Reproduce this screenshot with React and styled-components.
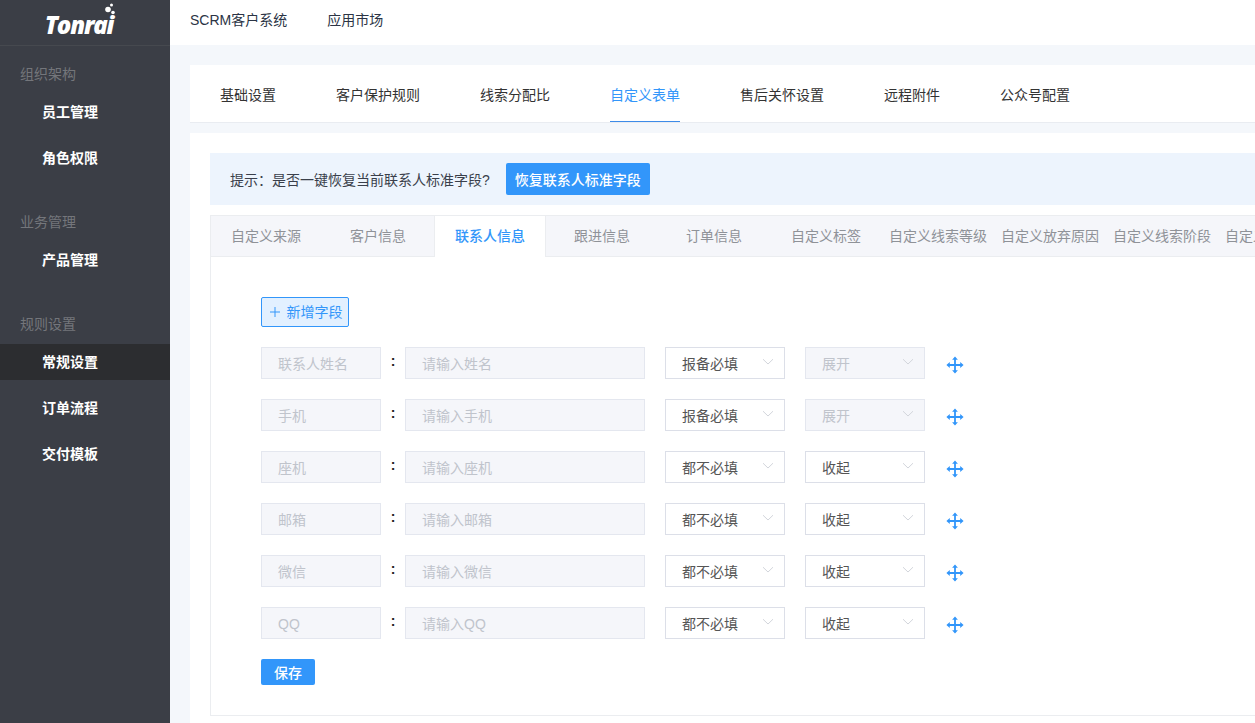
import React from 'react';
import styled, { createGlobalStyle } from 'styled-components';

const GlobalStyle = createGlobalStyle`
  html, body {
    margin: 0;
    height: 100%;
    overflow: hidden;
    background: #f4f7fb;
    font-family: "Liberation Sans", "Noto Sans CJK SC", sans-serif;
    font-size: 14px;
  }
  * { box-sizing: border-box; }
`;

const Page = styled.div`
  display: flex;
  width: 1255px;
  height: 723px;
  overflow: hidden;
`;

const Sidebar = styled.aside`
  flex: 0 0 170px;
  background: #3b3e46;
  color: #fff;
`;

const LogoBox = styled.div`
  height: 46px;
  display: flex;
  align-items: center;
  justify-content: center;
  border-bottom: 1px solid #46494f;
  padding: 4px 0 0;
`;

const LogoMark = styled.div`
  display: flex;
  align-items: flex-end;
  position: relative;
  margin-left: -12px;
`;

const LogoText = styled.span`
  font-family: "Open Sans", "Liberation Sans", sans-serif;
  font-size: 24px;
  font-weight: 800;
  font-style: italic;
  letter-spacing: -1.2px;
  color: #fff;
  line-height: 28px;
`;

const LogoDots = styled.svg`
  position: absolute;
  right: -3px;
  top: -8px;
`;

const MenuGroup = styled.div`
  padding: 17px 0 8px;
`;

const GroupLabel = styled.div`
  height: 22px;
  line-height: 22px;
  padding-left: 20px;
  color: #74767b;
  margin-bottom: 9px;
`;

const MenuItem = styled.div`
  height: 36px;
  line-height: 36px;
  margin-bottom: 10px;
  padding-left: 42px;
  font-weight: 700;
  color: #fff;
  background: ${(props) => (props.$active ? '#2c2d30' : 'transparent')};
`;

const Main = styled.div`
  flex: 1;
  min-width: 0;
  display: flex;
  flex-direction: column;
`;

const TopBar = styled.header`
  height: 45px;
  flex: none;
  background: #fff;
  display: flex;
  align-items: center;
  gap: 40px;
  padding: 0 20px 7px;
  color: #2b3445;
`;

const Content = styled.div`
  padding: 20px 0 0 20px;
  width: 1400px;
`;

const TabBar = styled.nav`
  height: 58px;
  background: #fff;
  display: flex;
  gap: 60px;
  padding-left: 30px;
  border-bottom: 1px solid #e9ecf1;
`;

const TabLink = styled.div`
  height: 57px;
  line-height: 60px;
  color: ${(props) => (props.$active ? '#3296fa' : '#333')};
  border-bottom: 1px solid ${(props) => (props.$active ? '#3d8be8' : 'transparent')};
`;

const Card = styled.section`
  margin-top: 10px;
  background: #fff;
  padding: 20px;
  height: 600px;
`;

const Notice = styled.div`
  height: 52px;
  background: #edf4fd;
  display: flex;
  align-items: center;
  gap: 16px;
  padding-left: 20px;
  color: #3a3f4b;
`;

const PrimaryButton = styled.button`
  border: none;
  border-radius: 2px;
  background: #3296fa;
  color: #fff;
  font: inherit;
  font-weight: 500;
  height: ${(props) => props.$height}px;
  padding: 0 ${(props) => props.$pad}px;
`;

const TabPanel = styled.div`
  margin-top: 10px;
  height: 501px;
  border: 1px solid #ebedf0;
`;

const PanelTabs = styled.div`
  display: flex;
  height: 41px;
  background: #f5f6fa;
  border-bottom: 1px solid #ebedf0;
`;

const PanelTab = styled.div`
  flex: 0 0 112px;
  height: ${(props) => (props.$active ? '41px' : '40px')};
  line-height: 41px;
  text-align: center;
  white-space: nowrap;
  color: ${(props) => (props.$active ? '#3296fa' : '#8f9298')};
  font-weight: ${(props) => (props.$active ? 500 : 400)};
  background: ${(props) => (props.$active ? '#fff' : 'transparent')};
  border-left: 1px solid ${(props) => (props.$active ? '#ebedf0' : 'transparent')};
  border-right: 1px solid ${(props) => (props.$active ? '#ebedf0' : 'transparent')};

  &:first-child {
    margin-left: -1px;
  }
`;

const PanelBody = styled.div`
  padding: 40px 0 0 50px;
`;

const AddButton = styled.button`
  height: 30px;
  width: 88px;
  border: 1px solid #3296fa;
  border-radius: 2px;
  background: #e2f0ff;
  color: #3296fa;
  font: inherit;
  line-height: 26px;
  display: flex;
  align-items: center;
  justify-content: center;
  gap: 7px;
  padding: 0 0 1px 2px;
  margin-bottom: 20px;
`;

const FieldRow = styled.div`
  display: flex;
  align-items: center;
  height: 32px;
  margin-bottom: 20px;
`;

const TextBox = styled.div`
  flex: 0 0 ${(props) => props.$width}px;
  height: 32px;
  line-height: 32px;
  padding-left: 16px;
  background: #f5f6fa;
  border: 1px solid #e4e7ef;
  color: #c0c4cc;
`;

const Colon = styled.span`
  flex: 0 0 24px;
  text-align: center;
  color: #222;
  line-height: 28px;
  height: 32px;
  font-weight: 700;
`;

const Select = styled.div`
  flex: 0 0 120px;
  height: 32px;
  line-height: 32px;
  margin-left: 20px;
  padding-left: 16px;
  position: relative;
  background: ${(props) => (props.$disabled ? '#f5f6fa' : '#fff')};
  border: 1px solid ${(props) => (props.$disabled ? '#e4e7ef' : '#dcdfe8')};
  color: ${(props) => (props.$disabled ? '#c0c4cc' : '#555')};
`;

const Chevron = styled.svg`
  position: absolute;
  right: 10px;
  top: 10px;
`;

const MoveIcon = styled.svg`
  margin-left: 21px;
  margin-top: 3px;
`;

const fields = [
  { label: '联系人姓名', hint: '请输入姓名', need: '报备必填', fold: '展开', locked: true },
  { label: '手机', hint: '请输入手机', need: '报备必填', fold: '展开', locked: true },
  { label: '座机', hint: '请输入座机', need: '都不必填', fold: '收起' },
  { label: '邮箱', hint: '请输入邮箱', need: '都不必填', fold: '收起' },
  { label: '微信', hint: '请输入微信', need: '都不必填', fold: '收起' },
  { label: 'QQ', hint: '请输入QQ', need: '都不必填', fold: '收起' },
];

const menu = [
  { title: '组织架构', items: ['员工管理', '角色权限'] },
  { title: '业务管理', items: ['产品管理'] },
  { title: '规则设置', items: ['常规设置', '订单流程', '交付模板'] },
];

const settingTabs = ['基础设置', '客户保护规则', '线索分配比', '自定义表单', '售后关怀设置', '远程附件', '公众号配置'];
const formTabs = ['自定义来源', '客户信息', '联系人信息', '跟进信息', '订单信息', '自定义标签', '自定义线索等级', '自定义放弃原因', '自定义线索阶段', '自定义线索来源'];

const Arrow = () => (
  <Chevron width="12" height="8" viewBox="0 0 12 8" fill="none">
    <path d="M1 1.2 L6 6 L11 1.2" stroke="#d3d6dc" strokeWidth="1" />
  </Chevron>
);

const Move = () => (
  <MoveIcon width="18" height="18" viewBox="0 0 18 18" fill="#3296fa">
    <path d="M8.1 3h1.8v5.1H15v1.8H9.9V15H8.1V9.9H3V8.1h5.1z" />
    <path d="M9 .4l2.9 3.4H6.1zM9 17.6l-2.9-3.4h5.8zM.4 9l3.4-2.9v5.8zM17.6 9l-3.4 2.9V6.1z" />
  </MoveIcon>
);

const App = () => (
  <Page>
    <GlobalStyle />
    <Sidebar>
      <LogoBox>
        <LogoMark>
          <LogoText>Tonrai</LogoText>
          <LogoDots width="12" height="14" viewBox="0 0 12 14" fill="#fff">
            <circle cx="7.5" cy="2" r="1.5" />
            <circle cx="4" cy="6.5" r="2.8" />
            <circle cx="9" cy="9.5" r="1.8" />
          </LogoDots>
        </LogoMark>
      </LogoBox>
      {menu.map((group) => (
        <MenuGroup key={group.title}>
          <GroupLabel>{group.title}</GroupLabel>
          {group.items.map((item) => (
            <MenuItem key={item} $active={item === '常规设置'}>{item}</MenuItem>
          ))}
        </MenuGroup>
      ))}
    </Sidebar>
    <Main>
      <TopBar>
        <span>SCRM客户系统</span>
        <span>应用市场</span>
      </TopBar>
      <Content>
        <TabBar>
          {settingTabs.map((tab) => (
            <TabLink key={tab} $active={tab === '自定义表单'}>{tab}</TabLink>
          ))}
        </TabBar>
        <Card>
          <Notice>
            <span>提示：是否一键恢复当前联系人标准字段?</span>
            <PrimaryButton $height={32} $pad={9}>恢复联系人标准字段</PrimaryButton>
          </Notice>
          <TabPanel>
            <PanelTabs>
              {formTabs.map((tab) => (
                <PanelTab key={tab} $active={tab === '联系人信息'}>{tab}</PanelTab>
              ))}
            </PanelTabs>
            <PanelBody>
              <AddButton>
                <svg width="10" height="10" viewBox="0 0 10 10" stroke="#3296fa" strokeWidth="1">
                  <path d="M5 0v10M0 5h10" />
                </svg>
                新增字段
              </AddButton>
              {fields.map((field) => (
                <FieldRow key={field.label}>
                  <TextBox $width={120}>{field.label}</TextBox>
                  <Colon>:</Colon>
                  <TextBox $width={240}>{field.hint}</TextBox>
                  <Select>{field.need}<Arrow /></Select>
                  <Select $disabled={field.locked}>{field.fold}<Arrow /></Select>
                  <Move />
                </FieldRow>
              ))}
              <PrimaryButton $height={26} $pad={13}>保存</PrimaryButton>
            </PanelBody>
          </TabPanel>
        </Card>
      </Content>
    </Main>
  </Page>
);

export default App;
